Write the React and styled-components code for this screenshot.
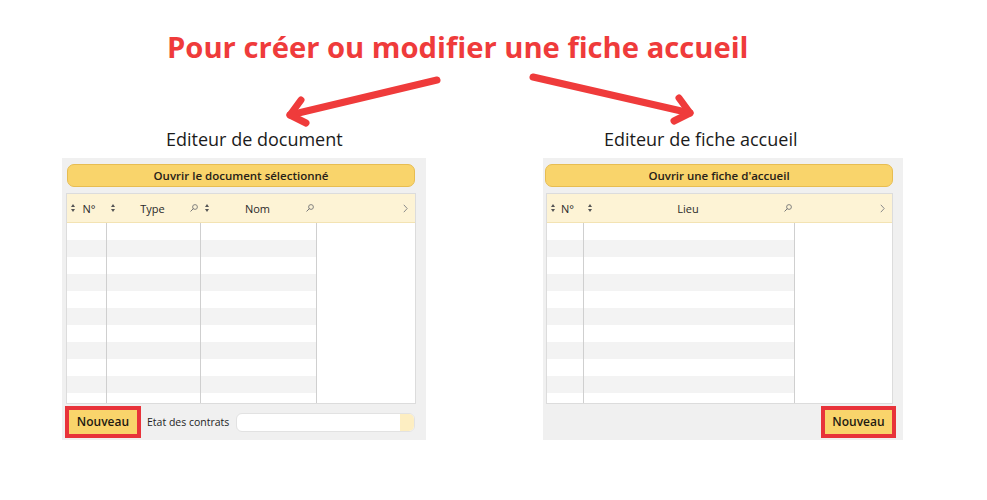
import React from 'react';
import styled, { createGlobalStyle } from 'styled-components';

const Global = createGlobalStyle`
  html, body { margin: 0; padding: 0; background: #ffffff; }
  body { font-family: "Open Sans", "Noto Sans", sans-serif; }
`;

const Page = styled.div`
  width: 987px;
  height: 500px;
  overflow: hidden;
  background: #ffffff;
`;

const Title = styled.h1`
  margin: 27px 0 0 167px;
  font: 700 29.2px/40px "Open Sans", sans-serif;
  color: #ef3b3b;
  white-space: nowrap;
`;

const Arrows = styled.svg`
  display: block;
  width: 987px;
  height: 60px;
`;

const Columns = styled.div`
  display: flex;
  gap: 117px;
  padding-left: 62px;
`;

const Column = styled.div`
  display: flex;
  flex-direction: column;
  width: ${p => p.$w}px;
`;

const Caption = styled.div`
  padding-left: ${p => p.$offset}px;
  margin-bottom: 7px;
  font: 400 18px/24px "Open Sans", sans-serif;
  color: #1b1b1b;
  white-space: nowrap;
`;

const Panel = styled.div`
  box-sizing: border-box;
  height: 282px;
  background: #f0f0f0;
  padding: 6px 10px 0 ${p => p.$padL}px;
  display: flex;
  flex-direction: column;
`;

const OpenButton = styled.div`
  box-sizing: border-box;
  height: 23px;
  margin-left: ${p => p.$shift}px;
  margin-right: ${p => p.$shiftR}px;
  border: 1px solid #e7bd52;
  border-radius: 7px;
  background: #f9d46b;
  display: flex;
  align-items: center;
  justify-content: center;
  font: 600 11.5px/1 "Open Sans", sans-serif;
  color: #262018;
`;

const Table = styled.div`
  margin-top: 6px;
  border: 1px solid #dcdcdc;
  background: #ffffff;
  display: flex;
  flex-direction: column;
`;

const HeaderRow = styled.div`
  display: grid;
  grid-template-columns: ${p => p.$cols};
  height: 28px;
  background: #fdf3d5;
  border-bottom: 1px solid #f3e3b3;
`;

const HeadCell = styled.div`
  display: flex;
  align-items: center;
  padding: 0 ${p => p.$padR ?? 4}px 0 4px;
  font: 400 11px/1 "Open Sans", sans-serif;
  color: #2a2a2a;
  min-width: 0;
`;

const HeadLabel = styled.span`
  flex: 1;
  text-align: center;
  white-space: nowrap;
`;

const EndCell = styled.div`
  display: flex;
  align-items: center;
  justify-content: flex-end;
  padding-right: 7px;
`;

const Body = styled.div`
  height: 180px;
  overflow: hidden;
`;

const Row = styled.div`
  display: grid;
  grid-template-columns: ${p => p.$cols};
  height: 17px;
`;

const Cell = styled.div`
  background: ${p => (p.$alt ? '#f3f3f3' : '#ffffff')};
  border-right: 1px solid #cfcfcf;
`;

const Filler = styled.div`
  background: #ffffff;
`;

const BottomBar = styled.div`
  flex: 1;
  display: flex;
  align-items: center;
  justify-content: ${p => (p.$end ? 'flex-end' : 'flex-start')};
  margin: 0 ${p => p.$mr ?? 0}px 0 ${p => p.$ml ?? 0}px;
`;

const RedFrame = styled.div`
  border: 4px solid #e8333a;
  display: flex;
`;

const NewButton = styled.div`
  box-sizing: border-box;
  width: ${p => p.$w}px;
  height: 24px;
  background: #f9d46b;
  display: flex;
  align-items: center;
  justify-content: center;
  font: 600 12px/1 "Open Sans", sans-serif;
  color: #1e1a12;
`;

const FieldLabel = styled.span`
  margin-left: 6px;
  font: 400 10.5px/1 "Open Sans", sans-serif;
  color: #1e1e1e;
  white-space: nowrap;
`;

const Field = styled.div`
  flex: 1;
  margin: 0 1px 0 7px;
  height: 19px;
  box-sizing: border-box;
  border: 1px solid #e2e2e2;
  border-radius: 6px;
  background: #ffffff;
  display: flex;
  justify-content: flex-end;
  overflow: hidden;
`;

const FieldKnob = styled.div`
  width: 14px;
  background: #fdeec2;
`;

const SortIcon = () => (
  <svg width="4" height="8" viewBox="0 0 4 8" style={{ flex: 'none' }}>
    <path d="M2 0 L4 3 L0 3 Z M2 8 L4 5 L0 5 Z" fill="#555" />
  </svg>
);

const SearchIcon = () => (
  <svg width="8" height="8" viewBox="0 0 8 8" style={{ flex: 'none' }}>
    <circle cx="5" cy="3" r="2.4" fill="none" stroke="#777" strokeWidth="0.9" />
    <path d="M3.3 4.7 L0.8 7.2" stroke="#777" strokeWidth="1" strokeLinecap="round" />
  </svg>
);

const Chevron = () => (
  <svg width="5" height="9" viewBox="0 0 5 9">
    <path d="M0.8 0.8 L4.2 4.5 L0.8 8.2" fill="none" stroke="#8a8a8a" strokeWidth="1" />
  </svg>
);

const ROWS = Array.from({ length: 11 }, (_, i) => i);

function Grid({ cols, headers }) {
  return (
    <Table>
      <HeaderRow $cols={cols}>
        {headers.map(h => (
          <HeadCell key={h.label} $padR={h.search ? 3 : 4}>
            <SortIcon />
            <HeadLabel>{h.label}</HeadLabel>
            {h.search && <SearchIcon />}
          </HeadCell>
        ))}
        <EndCell>
          <Chevron />
        </EndCell>
      </HeaderRow>
      <Body>
        {ROWS.map(r => (
          <Row key={r} $cols={cols}>
            {headers.map(h => (
              <Cell key={h.label} $alt={r % 2 === 1} />
            ))}
            <Filler />
          </Row>
        ))}
      </Body>
    </Table>
  );
}

export default function App() {
  return (
    <Page>
      <Global />
      <Title>Pour créer ou modifier une fiche accueil</Title>
      <Arrows viewBox="0 0 987 60">
        <g fill="none" stroke="#ef3b3b" strokeWidth="7" strokeLinecap="round" strokeLinejoin="round">
          <path d="M437 13 L290 48" />
          <path d="M301 33 L290 48 L306 56" />
          <path d="M533 10 L690 46" />
          <path d="M679 31 L690 46 L674 54" />
        </g>
      </Arrows>
      <Columns>
        <Column $w={364}>
          <Caption $offset={104}>Editeur de document</Caption>
          <Panel $padL={4}>
            <OpenButton $shift={1} $shiftR={1}>Ouvrir le document sélectionné</OpenButton>
            <Grid
              cols="40px 94px 116px 1fr"
              headers={[
                { label: 'N°' },
                { label: 'Type', search: true },
                { label: 'Nom', search: true },
              ]}
            />
            <BottomBar $ml={-1}>
              <RedFrame>
                <NewButton $w={68}>Nouveau</NewButton>
              </RedFrame>
              <FieldLabel>Etat des contrats</FieldLabel>
              <Field>
                <FieldKnob />
              </Field>
            </BottomBar>
          </Panel>
        </Column>
        <Column $w={360}>
          <Caption $offset={61}>Editeur de fiche accueil</Caption>
          <Panel $padL={3}>
            <OpenButton $shift={-1} $shiftR={0}>Ouvrir une fiche d'accueil</OpenButton>
            <Grid
              cols="37px 211px 1fr"
              headers={[
                { label: 'N°' },
                { label: 'Lieu', search: true },
              ]}
            />
            <BottomBar $end $mr={-3}>
              <RedFrame>
                <NewButton $w={67}>Nouveau</NewButton>
              </RedFrame>
            </BottomBar>
          </Panel>
        </Column>
      </Columns>
    </Page>
  );
}
